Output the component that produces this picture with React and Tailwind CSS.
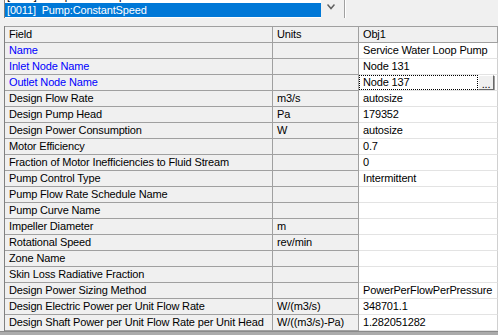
import React from "react";

const rows = [
  { f: "Name", u: "", v: "Service Water Loop Pump", blue: true },
  { f: "Inlet Node Name", u: "", v: "Node 131", blue: true },
  { f: "Outlet Node Name", u: "", v: "Node 137", blue: true, edit: true },
  { f: "Design Flow Rate", u: "m3/s", v: "autosize" },
  { f: "Design Pump Head", u: "Pa", v: "179352" },
  { f: "Design Power Consumption", u: "W", v: "autosize" },
  { f: "Motor Efficiency", u: "", v: "0.7" },
  { f: "Fraction of Motor Inefficiencies to Fluid Stream", u: "", v: "0" },
  { f: "Pump Control Type", u: "", v: "Intermittent" },
  { f: "Pump Flow Rate Schedule Name", u: "", v: "" },
  { f: "Pump Curve Name", u: "", v: "" },
  { f: "Impeller Diameter", u: "m", v: "" },
  { f: "Rotational Speed", u: "rev/min", v: "" },
  { f: "Zone Name", u: "", v: "" },
  { f: "Skin Loss Radiative Fraction", u: "", v: "" },
  { f: "Design Power Sizing Method", u: "", v: "PowerPerFlowPerPressure" },
  { f: "Design Electric Power per Unit Flow Rate", u: "W/(m3/s)", v: "348701.1" },
  { f: "Design Shaft Power per Unit Flow Rate per Unit Head", u: "W/((m3/s)-Pa)", v: "1.282051282" },
];

const font = { fontFamily: '"Liberation Sans", Arial, sans-serif' };

export default function App() {
  return (
    <div
      className="w-[498px] h-[335px] overflow-hidden bg-[#f0f0f0] flex flex-col text-[11px] tracking-[-0.15px] text-black"
      style={font}
    >
      {/* top selector area */}
      <div className="h-[26px] flex shrink-0">
        <div className="ml-1 w-[317px] h-[18px] overflow-hidden bg-white border-l border-[#808080] flex flex-col">
          <div className="h-[14px] mt-[-11px] shrink-0 pl-[2px] leading-[14px] whitespace-nowrap">
            [0010]&nbsp;&nbsp;Pump:VariableSpeed
          </div>
          <div className="h-[14px] shrink-0 bg-[#0078d7] text-white pl-[2px] leading-[14px] whitespace-nowrap">
            [0011]&nbsp; Pump:ConstantSpeed
          </div>
        </div>
        <div className="w-[20px] h-[18px] bg-[#f0f0f0] flex justify-center pt-[4px]">
          <svg width="8" height="6" viewBox="0 0 8 6">
            <polyline points="0.5,0.5 4,4.5 7.5,0.5" fill="none" stroke="#606060" strokeWidth="1.5" />
          </svg>
        </div>
        <div className="ml-[3px] w-[2px] h-[18px] border-l border-[#a0a0a0] border-r border-r-white" />
        <div className="flex-1" />
      </div>

      {/* grid */}
      <div className="ml-1 border-l border-[#808080] flex flex-col shrink-0">
        <div className="flex h-[17px] border-t border-[#a0a0a0] bg-[#f0f0f0]">
          <div className="w-[268px] border-r border-b border-[#a0a0a0] pl-1 leading-[15px]">Field</div>
          <div className="w-[86px] border-r border-b border-[#a0a0a0] pl-1 leading-[15px]">Units</div>
          <div className="w-[139px] border-r border-b border-[#a0a0a0] pl-1 leading-[15px]">Obj1</div>
        </div>
        {rows.map((r, i) => (
          <div key={i} className="flex h-[16px]">
            <div
              className={
                "w-[268px] border-r border-b border-[#a0a0a0] bg-[#f0f0f0] pl-1 leading-[15px] whitespace-nowrap overflow-hidden " +
                (r.blue ? "text-[#0000ff]" : "")
              }
            >
              {r.f}
            </div>
            <div className="w-[86px] border-r border-b border-[#a0a0a0] bg-[#f0f0f0] pl-1 leading-[15px] whitespace-nowrap overflow-hidden">
              {r.u}
            </div>
            <div className="w-[139px] border-r border-b border-r-[#d0d0d0] border-b-[#e3e3e3] bg-white leading-[15px] whitespace-nowrap overflow-hidden flex">
              {r.edit ? (
                <>
                  <div className="w-[119px] h-[15px] border border-dotted border-black pl-[3px] leading-[13px]">{r.v}</div>
                  <div className="w-[16px] h-[15px] bg-[#f0f0f0] border-t border-l border-white border-r border-b border-r-[#696969] border-b-[#696969] shadow-[1px_1px_0_#a0a0a0] flex items-end justify-center leading-[10px] text-[11px]">
                    ...
                  </div>
                </>
              ) : (
                <div className="pl-1">{r.v}</div>
              )}
            </div>
          </div>
        ))}
      </div>
      <div className="flex-1 bg-[#ababab] border-t border-[#8a8a8a]" />
    </div>
  );
}
